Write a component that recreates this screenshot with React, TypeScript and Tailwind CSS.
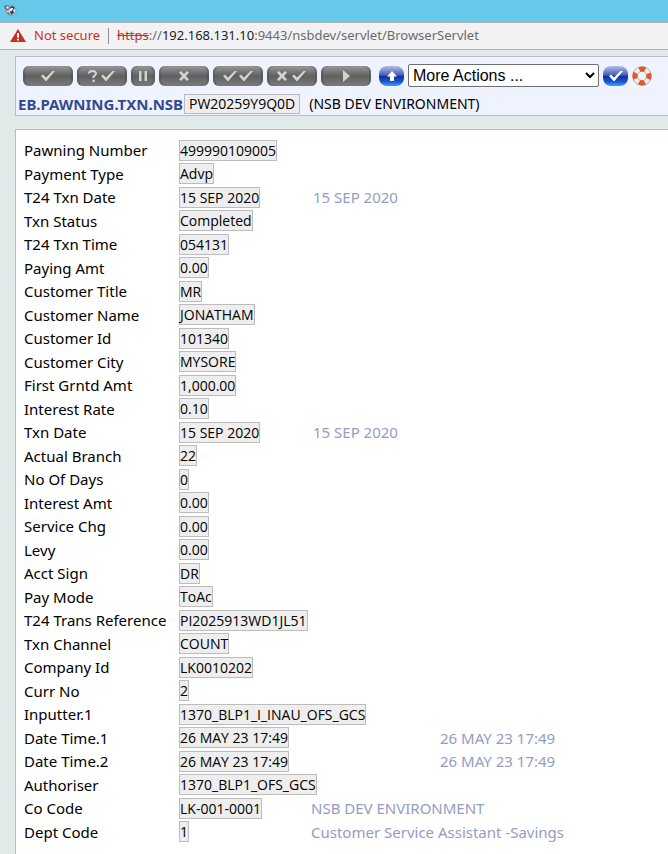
import type { ReactNode } from "react";

const labelFont = "font-['Trebuchet_MS','Noto_Sans',sans-serif]";
const valueFont = "font-['Open_Sans',sans-serif]";

type Enrichment = "date" | "dateTime" | "name";

interface Field {
  label: string;
  value: string;
  note?: string;
  kind?: Enrichment;
}

const fields: Field[] = [
  { label: "Pawning Number", value: "499990109005" },
  { label: "Payment Type", value: "Advp" },
  { label: "T24 Txn Date", value: "15 SEP 2020", note: "15 SEP 2020", kind: "date" },
  { label: "Txn Status", value: "Completed" },
  { label: "T24 Txn Time", value: "054131" },
  { label: "Paying Amt", value: "0.00" },
  { label: "Customer Title", value: "MR" },
  { label: "Customer Name", value: "JONATHAM" },
  { label: "Customer Id", value: "101340" },
  { label: "Customer City", value: "MYSORE" },
  { label: "First Grntd Amt", value: "1,000.00" },
  { label: "Interest Rate", value: "0.10" },
  { label: "Txn Date", value: "15 SEP 2020", note: "15 SEP 2020", kind: "date" },
  { label: "Actual Branch", value: "22" },
  { label: "No Of Days", value: "0" },
  { label: "Interest Amt", value: "0.00" },
  { label: "Service Chg", value: "0.00" },
  { label: "Levy", value: "0.00" },
  { label: "Acct Sign", value: "DR" },
  { label: "Pay Mode", value: "ToAc" },
  { label: "T24 Trans Reference", value: "PI2025913WD1JL51" },
  { label: "Txn Channel", value: "COUNT" },
  { label: "Company Id", value: "LK0010202" },
  { label: "Curr No", value: "2" },
  { label: "Inputter.1", value: "1370_BLP1_I_INAU_OFS_GCS" },
  { label: "Date Time.1", value: "26 MAY 23 17:49", note: "26 MAY 23 17:49", kind: "dateTime" },
  { label: "Date Time.2", value: "26 MAY 23 17:49", note: "26 MAY 23 17:49", kind: "dateTime" },
  { label: "Authoriser", value: "1370_BLP1_OFS_GCS" },
  { label: "Co Code", value: "LK-001-0001", note: "NSB DEV ENVIRONMENT", kind: "name" },
  { label: "Dept Code", value: "1", note: "Customer Service Assistant -Savings", kind: "name" },
];

const valueSlot: Record<Enrichment, string> = {
  date: "w-[134px]",
  dateTime: "w-[261px]",
  name: "w-[132px]",
};

const tick = "M0 5 L2 3.5 L5 6.5 L11.5 0 L14 0 L5.5 10 L4.5 10 Z";
const cross = "M0 1.5 L2 0 L5 3 L8 0 L10 1.5 L7 5 L10 8.5 L8 10 L5 7 L2 10 L0 8.5 L3 5 Z";

function ToolButton({ label, narrow, children }: { label: string; narrow?: boolean; children: ReactNode }) {
  return (
    <button
      type="button"
      aria-label={label}
      className={`${narrow ? "w-6" : "w-[50px]"} flex h-5 shrink-0 items-center justify-center rounded-md bg-linear-to-b from-[#999999] via-[#606060] via-50% to-[#7c7c7c] text-[#d2d2d2] shadow-[inset_2px_0_1px_#4c4c4c66,inset_-2px_0_1px_#4c4c4c66]`}
    >
      {children}
    </button>
  );
}

function Glyph({ width, children }: { width: number; children: ReactNode }) {
  return (
    <svg width={width} height="12" viewBox={`0 0 ${width} 12`} fill="currentColor" aria-hidden="true">
      {children}
    </svg>
  );
}

function BlueButton({ label, children }: { label: string; children: ReactNode }) {
  return (
    <button
      type="button"
      aria-label={label}
      className="flex h-5 w-[25px] shrink-0 items-center justify-center rounded-lg bg-[linear-gradient(#b4bde2,#4a60b8_45%,#0f2fa6_52%,#1b55d0_78%,#3fa0fb)] text-white"
    >
      {children}
    </button>
  );
}

function Globe() {
  return (
    <svg width="13" height="13" viewBox="0 0 13 13" aria-hidden="true">
      <circle cx="7" cy="6.5" r="5" fill="#c9d8e2" stroke="#8796a3" />
      <path d="M5 3 L9 2 L11 4 L9 6 L10 9 L7 11 L6 8 L8 6 Z" fill="#23496f" />
      <path d="M7 4 L9 4 L8 7 L6 6 Z" fill="#f6f6f6" />
      <path d="M0 2 L4 1 L6 4 L4 7 L1 5 Z" fill="#666c72" />
      <path d="M2 3 L4 2 L5 4 L3 5 Z" fill="#e8e8e8" />
      <path d="M3 8 L5 8 L6 11 L4 11 Z" fill="#7e858a" />
    </svg>
  );
}

function LifeRing() {
  return (
    <svg width="20" height="20" viewBox="0 0 20 20" aria-hidden="true">
      <circle cx="10" cy="10" r="7" fill="none" stroke="#b9b4b2" strokeWidth="5.6" />
      <circle cx="10" cy="10" r="7" fill="none" stroke="#f1eeeb" strokeWidth="4" />
      <circle
        cx="10"
        cy="10"
        r="7"
        fill="none"
        stroke="#dc5a2c"
        strokeWidth="5"
        strokeDasharray="6 5"
        strokeDashoffset="3"
      />
    </svg>
  );
}

export default function App() {
  return (
    <div className="flex min-h-screen flex-col overflow-x-hidden bg-[#e0eae8] text-black">
      <header>
        <div className="flex h-[22px] items-start bg-[#67c9ea] px-1 pt-1">
          <Globe />
        </div>
        <div className="flex h-7 items-center border-y border-[#b0b0b2] bg-[#f2f2f4] pl-[10px] font-['Noto_Sans',sans-serif] text-[13px]">
          <svg width="16" height="14" viewBox="0 0 16 14" aria-hidden="true">
            <path d="M8 0 L16 13 L0 13 Z" fill="#c5301f" />
            <path d="M7 4 H9 V8.5 H7 Z M7 9.8 H9 V11.6 H7 Z" fill="#fff" />
          </svg>
          <span className="ml-2 text-[#c8321f]">Not secure</span>
          <span className="mx-2 h-4 w-px bg-[#8c8c8c]" />
          <span className="whitespace-nowrap text-[#6b6b6b]">
            <span className="text-[#c8321f] line-through">https</span>://<span className="text-[#222]">192.168.131.10</span>
            :9443/nsbdev/servlet/BrowserServlet
          </span>
        </div>
      </header>

      <section className="mt-[6px] ml-[15px] h-[60px] border border-r-0 border-[#bcbcc0] bg-[#eff2ff]">
        <div className="flex h-[37px] items-center gap-1 pl-[7px]">
          <ToolButton label="Commit">
            <Glyph width={14}><path d={tick} transform="translate(0 1)" /></Glyph>
          </ToolButton>
          <ToolButton label="Validate">
            <Glyph width={28}>
              <path d="M1 3.5 Q1 1 4.5 1 Q8 1 8 3.6 Q8 5 5.5 6.6 V8" fill="none" stroke="currentColor" strokeWidth="2" />
              <path d="M4.4 9.6 H6.8 V12 H4.4 Z" />
              <path d={tick} transform="translate(13 1)" />
            </Glyph>
          </ToolButton>
          <ToolButton label="Hold" narrow>
            <Glyph width={8}><path d="M0 1 H2.5 V11 H0 Z M5.5 1 H8 V11 H5.5 Z" /></Glyph>
          </ToolButton>
          <ToolButton label="Delete">
            <Glyph width={10}><path d={cross} transform="translate(0 1)" /></Glyph>
          </ToolButton>
          <ToolButton label="Authorise">
            <Glyph width={30}>
              <path d={tick} transform="translate(0 1)" />
              <path d={tick} transform="translate(16 1)" />
            </Glyph>
          </ToolButton>
          <ToolButton label="Reverse">
            <Glyph width={30}>
              <path d={cross} transform="translate(0 1)" />
              <path d={tick} transform="translate(15 1)" />
            </Glyph>
          </ToolButton>
          <ToolButton label="Run">
            <Glyph width={7}><path d="M0 0 L7 6 L0 12 Z" /></Glyph>
          </ToolButton>
          <span className="w-0" />
          <BlueButton label="Return">
            <Glyph width={12}><path d="M6 1 L11 6.5 H8 V11 H4 V6.5 H1 Z" /></Glyph>
          </BlueButton>
          <select
            aria-label="More actions"
            className="h-[23px] w-[191px] shrink-0 rounded-xs border border-[#6f6f6f] bg-white font-['Liberation_Sans',sans-serif] text-base leading-5"
          >
            <option>More Actions ...</option>
          </select>
          <BlueButton label="Go">
            <Glyph width={14}><path d={tick} transform="translate(0 1)" /></Glyph>
          </BlueButton>
          <button type="button" aria-label="Help" className="shrink-0">
            <LifeRing />
          </button>
        </div>
        <h1 className={`${labelFont} flex items-center pl-0.5 text-[15px] leading-5 whitespace-nowrap`}>
          <span className="w-[166px] font-bold text-[#334a8f]">EB.PAWNING.TXN.NSB</span>
          <span className={`${valueFont} border border-[#bcbcbc] bg-[#eeeeee] px-1 text-sm leading-[18px]`}>PW20259Y9Q0D</span>
          <span className="ml-[9px] text-sm">(NSB DEV ENVIRONMENT)</span>
        </h1>
      </section>

      <main className="mt-[13px] ml-[15px] flex-1 border-t border-l border-[#bcbcbc] bg-white pt-2 pl-2">
        <table className="w-full border-collapse text-[15px] whitespace-nowrap">
          <tbody>
            {fields.map((field) => (
              <tr key={field.label} className="odd:h-6 even:h-[23px]">
                <th scope="row" className={`${labelFont} w-[155px] p-0 text-left leading-5 font-normal`}>
                  {field.label}
                </th>
                <td className="p-0">
                  <div className="flex items-center">
                    <div className={`${field.kind ? valueSlot[field.kind] : ""} flex`}>
                      <span className={`${valueFont} border border-[#bcbcbc] bg-[#eeeeee] text-sm leading-[19px]`}>
                        {field.value}
                      </span>
                    </div>
                    {field.note && <span className={`${labelFont} leading-5 text-[#929dc1]`}>{field.note}</span>}
                  </div>
                </td>
              </tr>
            ))}
          </tbody>
        </table>
      </main>
    </div>
  );
}
